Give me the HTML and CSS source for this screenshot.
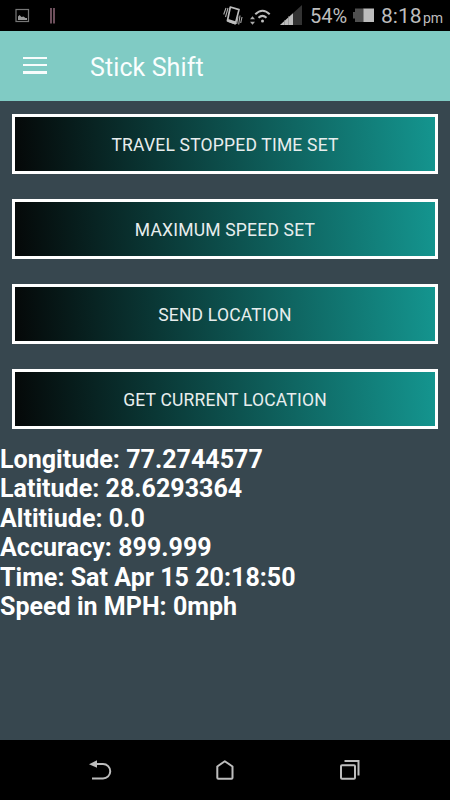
FILE: index.html
```html
<!DOCTYPE html>
<html lang="en">
<head>
<meta charset="utf-8">
<title>Stick Shift</title>
<link rel="stylesheet" href="styles.css">
</head>
<body>
<div class="screen">
  <header class="status">
    <svg class="status-left" width="60" height="31" viewBox="0 0 60 31">
      <rect x="16" y="9.500" width="12.500" height="12" fill="#000" stroke="#777" stroke-width="1.200"/>
      <path d="M18 20v-3.500l1.500-1.500 2 2 2-.5 2 1.500h1.500v2z" fill="#999"/>
      <path d="M51 8v15.500M54 8v15.500" stroke="#805d6c" stroke-width="1.700"/>
    </svg>
    <svg class="status-icons" width="84" height="31" viewBox="220 0 84 31">
      <path d="M230.300 7l8.700 2.600-3.600 14-8-2.800z" fill="none" stroke="#bdbdbd" stroke-width="1.700" stroke-linejoin="round"/>
      <path d="M227.800 20.300l7.800 2.700" stroke="#bdbdbd" stroke-width="3"/>
      <path d="M226 8l-2.300 6.500M228 8l-2.500 9M238 16.500l-1.300 7.500M240 15.500l-1.300 9M242 17l-1.300 6" fill="none" stroke="#aaa" stroke-width="1.100"/>
      <path d="M250 19.200l2.500-3 2.500 3zM250 21.700l2.500 3 2.500-3z" fill="#aaa"/>
      <path d="M255.300 14.200q7.200-7 14.400 0M258.500 17.700q4-3.700 8 0" fill="none" stroke="#bdbdbd" stroke-width="2"/>
      <circle cx="262.500" cy="21" r="1.500" fill="#bdbdbd"/>
      <path d="M280 25L302 5v20z" fill="#333"/>
      <path d="M280 25L293 13.200V25z" fill="#bdbdbd"/>
      <path d="M284.500 20v5M288.500 16v9" stroke="#888" stroke-width=".6"/>
    </svg>
    <span class="percent">54%</span>
    <svg class="battery" width="22" height="31" viewBox="0 0 22 31">
      <path d="M0 12h2V8.500h9V22H2v-3.500H0z" fill="#505050"/>
      <path d="M10.500 8.500H21V22H10.500z" fill="#bdbdbd"/>
    </svg>
    <span class="clock">8:18</span><span class="pm">pm</span>
  </header>

  <nav class="toolbar">
    <div class="menu"><i></i><i></i><i></i></div>
    <h1 class="title">Stick Shift</h1>
  </nav>

  <main class="content">
    <div class="buttons">
      <button class="btn">TRAVEL STOPPED TIME SET</button>
      <button class="btn">MAXIMUM SPEED SET</button>
      <button class="btn">SEND LOCATION</button>
      <button class="btn">GET CURRENT LOCATION</button>
    </div>
    <div class="info">
      <p>Longitude: 77.2744577</p>
      <p>Latitude: 28.6293364</p>
      <p>Altitiude: 0.0</p>
      <p>Accuracy: 899.999</p>
      <p>Time: Sat Apr 15 20:18:50</p>
      <p>Speed in MPH: 0mph</p>
    </div>
  </main>

  <footer class="navbar">
    <svg width="450" height="60" viewBox="0 740 450 60" fill="none" stroke="#bdbdbd" stroke-width="2">
      <path d="M94 764h9a7.200 7.200 0 0 1 0 14.500H92"/>
      <path d="M89 764.300l8-4v7.500z" fill="#bdbdbd" stroke="none"/>
      <path d="M217.300 766.500l7.500-5.300 7.700 5.300v11.200q0 1-1 1h-13.200q-1 0-1-1z" stroke-linejoin="round"/>
      <rect x="341" y="765.300" width="14" height="13.500" rx="1"/>
      <path d="M344.500 761h14v14.500"/>
    </svg>
  </footer>
</div>
</body>
</html>
```

FILE: styles.css
```css
* { box-sizing: border-box; }
body { margin: 0; background: #000; font-family: Roboto, "Liberation Sans", sans-serif; }
.screen { width: 450px; height: 800px; display: flex; flex-direction: column; background: #37474f; overflow: hidden; }
.status { height: 31px; flex: none; display: flex; background: #000; color: #bdbdbd; line-height: 33px; white-space: nowrap; }
.status svg { flex: none; display: block; }
.status-icons { margin-left: 160px; }
.percent { width: 42px; margin-left: 6px; font-size: 20px; }
.battery { margin-left: 1px; }
.clock { width: 42px; margin-left: 6px; font-size: 21px; }
.pm { font-size: 14px; line-height: 37px; }
.toolbar { height: 70px; flex: none; display: flex; align-items: center; background: #80cbc4; }
.menu { width: 24px; height: 17px; margin: -2px 0 0 23px; display: flex; flex-direction: column; justify-content: space-between; }
.menu i { height: 2.5px; background: #f8fcfc; }
.title { margin: 3px 0 0 43px; color: #fafefe; font-size: 25px; font-weight: 400; line-height: 30px; letter-spacing: .1px; }
.content { flex: 1; }
.buttons { display: flex; flex-direction: column; gap: 25px; padding: 13px 12px 0; }
.btn { height: 60px; padding: 2px 0 0; border: 3px solid #fff; border-radius: 0; background: linear-gradient(86deg, #050808, #14958f) padding-box; color: #e8eeee; font: 17.5px Roboto, "Liberation Sans", sans-serif; letter-spacing: .2px; }
.info { padding-top: 16px; color: #fff; font-size: 25px; font-weight: 700; line-height: 29.4px; letter-spacing: .03px; }
.info p { margin: 0; }
.navbar { height: 60px; flex: none; background: #000; }
.navbar svg { display: block; }
```
